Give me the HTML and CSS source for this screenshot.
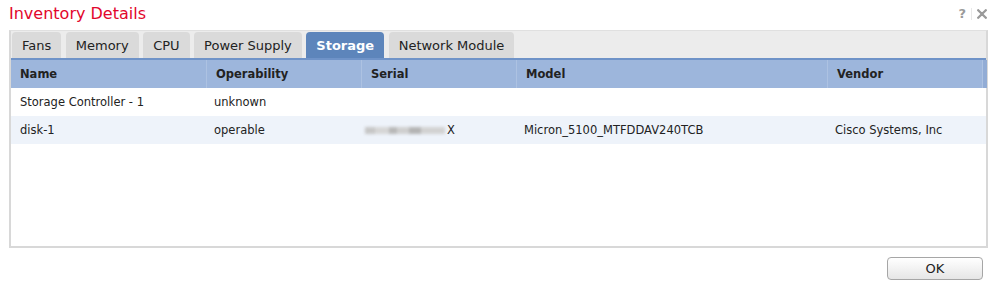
FILE: index.html
```html
<!DOCTYPE html>
<html>
<head>
<meta charset="utf-8">
<link rel="stylesheet" href="styles.css">
</head>
<body>
<div class="dialog">
  <div class="titlebar">
    <h1 class="title">Inventory Details</h1>
    <div class="controls">
      <span class="help">?</span>
      <span class="sep"></span>
      <svg class="close" width="10" height="10" viewBox="0 0 10 10" aria-label="close">
        <path d="M1.2 1.2 L8.8 8.8 M8.8 1.2 L1.2 8.8" stroke="#9a9a9a" stroke-width="2.3" stroke-linecap="round"/>
      </svg>
    </div>
  </div>
  <div class="tabbox">
    <div class="tabs">
      <div class="tab">Fans</div>
      <div class="tab">Memory</div>
      <div class="tab">CPU</div>
      <div class="tab">Power Supply</div>
      <div class="tab active">Storage</div>
      <div class="tab">Network Module</div>
    </div>
    <div class="panel">
      <div class="grid head">
        <div class="cell">Name</div>
        <div class="cell">Operability</div>
        <div class="cell">Serial</div>
        <div class="cell">Model</div>
        <div class="cell">Vendor</div>
        <div class="cell scroll"></div>
      </div>
      <div class="grid row">
        <div class="cell">Storage Controller - 1</div>
        <div class="cell">unknown</div>
        <div class="cell"></div>
        <div class="cell"></div>
        <div class="cell"></div>
      </div>
      <div class="grid row alt">
        <div class="cell">disk-1</div>
        <div class="cell">operable</div>
        <div class="cell serial"><span class="blur"></span>X</div>
        <div class="cell">Micron_5100_MTFDDAV240TCB</div>
        <div class="cell">Cisco Systems, Inc</div>
      </div>
    </div>
  </div>
  <div class="footer">
    <button class="ok">OK</button>
  </div>
</div>
</body>
</html>
```

FILE: styles.css
```css
html, body {
  margin: 0;
  padding: 0;
  background: #ffffff;
}
body {
  font-family: "DejaVu Sans", Verdana, sans-serif;
  color: #222;
}
.dialog {
  width: 999px;
  height: 284px;
  box-sizing: border-box;
  padding: 0 11px 0 9px;
}
.titlebar {
  height: 30px;
  display: flex;
  justify-content: space-between;
  align-items: flex-start;
}
.title {
  margin: 4px 0 0 0;
  font-size: 16px;
  font-weight: normal;
  color: #e2062c;
  line-height: 20px;
}
.controls {
  display: flex;
  align-items: center;
  gap: 5px;
  margin-top: 7px;
  margin-right: 1px;
  color: #9a9a9a;
  font-weight: bold;
}
.help {
  font-size: 13px;
  line-height: 13px;
}
.sep {
  width: 1px;
  height: 12px;
  background: #e8e8e8;
}
.close {
  display: block;
}
.tabbox {
  height: 218px;
  box-sizing: border-box;
  background: #ececec;
  border: 2px solid #d8d8d8;
  border-top: 1px solid #e0e0e0;
  display: flex;
  flex-direction: column;
}
.tabs {
  display: flex;
  gap: 4.5px;
  padding: 1px 0 0 1px;
  height: 26px;
}
.tab {
  height: 26px;
  box-sizing: border-box;
  padding: 0 10px;
  display: flex;
  align-items: center;
  font-size: 13px;
  background: #dadada;
  border-radius: 4px 4px 0 0;
  color: #222;
}
.tab.active {
  background: #5d85bb;
  color: #fff;
  font-weight: bold;
}
.panel {
  flex: 1;
  background: #fff;
  border-top: 2px solid #6f93c8;
}
.grid {
  display: grid;
  grid-template-columns: 195px 155px 155px 311px 155px 5px;
}
.cell {
  font-size: 11.5px;
  padding-left: 9px;
  display: flex;
  align-items: center;
  white-space: nowrap;
}
.head {
  height: 28px;
  background: #9db6dc;
}
.head .cell {
  font-weight: bold;
  color: #222;
  border-left: 1px solid #adc2e2;
}
.head .cell:first-child {
  border-left: none;
}
.head .cell.scroll {
  padding: 0;
  background: #92acd5;
}
.row {
  height: 28px;
  grid-template-columns: 195px 155px 155px 311px 155px;
}
.row .cell {
  padding-left: 9px;
}
.row .cell:nth-child(n+2) {
  padding-left: 8px;
}
.row.alt {
  background: #eef3fa;
}
.serial {
  padding-left: 4px !important;
}
.blur {
  display: inline-block;
  width: 80px;
  height: 7px;
  background: linear-gradient(90deg, #c6c6c6 0 12%, #d6d6d6 12% 30%, #b8b8b8 30% 40%, #cfcfcf 40% 55%, #b4b4b4 55% 70%, #d2d2d2 70% 100%);
  filter: blur(1.5px);
  margin-right: 2px;
}
.footer {
  display: flex;
  justify-content: flex-end;
  padding: 9px 5px 0 0;
}
.ok {
  width: 96px;
  height: 23px;
  border: 1px solid #a6a6a6;
  border-radius: 4px;
  background: linear-gradient(#ffffff, #e6e6e6);
  font-family: "DejaVu Sans", Verdana, sans-serif;
  font-size: 13px;
  color: #222;
  padding: 0;
}
```
